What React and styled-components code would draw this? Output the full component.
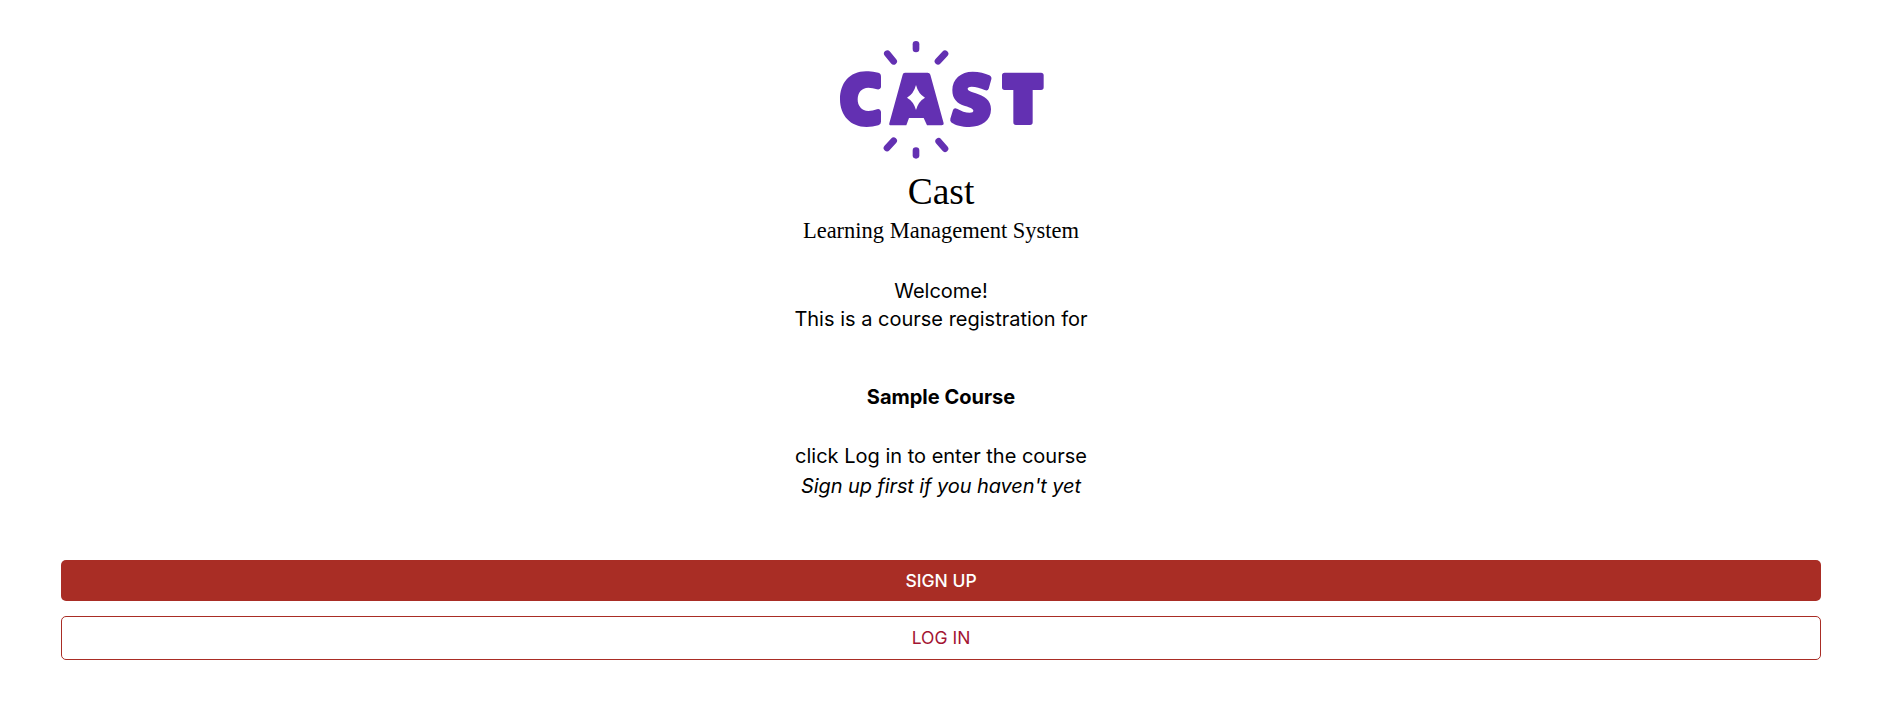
import styled, { createGlobalStyle } from "styled-components";

const GlobalStyle = createGlobalStyle`
  html, body {
    margin: 0;
    padding: 0;
    background: #fff;
    color: #000;
    font-family: "Inter", "Liberation Sans", sans-serif;
  }
`;

const Page = styled.main`
  display: flex;
  flex-direction: column;
  align-items: center;
  padding: 30px 66px 0 61px;
  min-height: 694px;
`;

const Logo = styled.svg`
  display: block;
  width: 240px;
  height: 140px;
`;

const Title = styled.h1`
  margin: 1px 0 0;
  font-family: "Liberation Serif", serif;
  font-size: 37.5px;
  line-height: 42px;
  font-weight: 400;
`;

const Subtitle = styled.h2`
  margin: 5px 0 33px;
  font-family: "Liberation Serif", serif;
  font-size: 22.5px;
  line-height: 26px;
  font-weight: 400;
`;

const Line = styled.p`
  margin: 0 0 ${(p) => p.$after || 0}px;
  font-size: 20px;
  line-height: 28px;
  text-align: center;
  font-weight: ${(p) => (p.$bold ? 700 : 400)};
  font-style: ${(p) => (p.$italic ? "italic" : "normal")};
  letter-spacing: ${(p) => (p.$italic ? "-0.1px" : "normal")};
`;

const Actions = styled.div`
  display: flex;
  flex-direction: column;
  gap: 15px;
  width: 100%;
  margin-top: 60px;
`;

const Button = styled.button`
  display: block;
  width: 100%;
  height: ${(p) => (p.$outline ? 44 : 41)}px;
  padding: 0 0 ${(p) => (p.$outline ? 2 : 0)}px;
  border: ${(p) => (p.$outline ? "1px solid #a92d25" : "none")};
  border-radius: 5px;
  background: ${(p) => (p.$outline ? "#fff" : "#a92d25")};
  color: ${(p) => (p.$outline ? "#a31432" : "#fff")};
  font-family: "Inter", "Liberation Sans", sans-serif;
  font-size: 17.5px;
  font-weight: ${(p) => (p.$outline ? 400 : 500)};
`;

function CastLogo() {
  const purple = "#6330b2";
  return (
    <Logo viewBox="0 0 720 420" role="img" aria-label="Cast logo">
      <g stroke={purple} strokeWidth="20" strokeLinecap="round">
        <line x1="285" y1="43" x2="285" y2="57" />
        <line x1="199" y1="71" x2="218" y2="94" />
        <line x1="372" y1="71" x2="351" y2="94" />
        <line x1="218" y1="332" x2="198" y2="354" />
        <line x1="353" y1="334" x2="372" y2="356" />
        <line x1="285" y1="362" x2="285" y2="376" />
      </g>
      <path
        fill={purple}
        d="M172 128 Q150 122 135 124 C85 124 57 160 57 208 C57 256 88 291 137 291 Q155 291 172 286 Q180 283 180 275 L180 245 Q178 235 168 238 Q155 243 142 243 C122 243 110 228 110 208 C110 188 122 173 142 173 Q155 173 168 178 Q178 180 180 172 L180 140 Q180 130 172 128 Z"
      />
      <path
        fill={purple}
        d="M252 128 L320 128 Q326 128 328 134 L368 280 Q369 286 362 286 L318 286 L308 264 L264 264 L256 286 L210 286 Q203 286 205 280 L245 134 Q246 128 252 128 Z"
      />
      <path
        fill="#fff"
        d="M285 165 Q292 192 312 203 Q292 214 285 240 Q278 214 258 203 Q278 192 285 165 Z"
      />
      <path
        fill={purple}
        d="M455 125 C475 125 492 130 505 136 Q513 140 511 148 L503 176 Q500 184 491 180 C478 174 465 170 452 170 C443 170 440 173 440 176 C440 181 448 184 462 189 C490 198 510 210 510 238 C510 272 482 291 445 291 C422 291 403 285 392 278 Q386 274 388 266 L396 240 Q399 232 408 236 C420 243 434 248 446 248 C454 248 457 245 457 242 C457 237 449 233 432 228 C408 220 394 207 394 180 C394 147 420 125 455 125 Z"
      />
      <path
        fill={purple}
        d="M551 128 L660 128 Q668 128 668 136 L668 172 Q668 180 660 180 L635 180 L635 277 Q635 285 627 285 L585 285 Q577 285 577 277 L577 180 L551 180 Q543 180 543 172 L543 136 Q543 128 551 128 Z"
      />
    </Logo>
  );
}

export default function App() {
  return (
    <>
      <GlobalStyle />
      <Page>
        <CastLogo />
        <Title>Cast</Title>
        <Subtitle>Learning Management System</Subtitle>
        <Line>Welcome!</Line>
        <Line $after={50}>This is a course registration for</Line>
        <Line $bold $after={31}>Sample Course</Line>
        <Line $after={2}>click Log in to enter the course</Line>
        <Line $italic>Sign up first if you haven't yet</Line>
        <Actions>
          <Button>SIGN UP</Button>
          <Button $outline>LOG IN</Button>
        </Actions>
      </Page>
    </>
  );
}
